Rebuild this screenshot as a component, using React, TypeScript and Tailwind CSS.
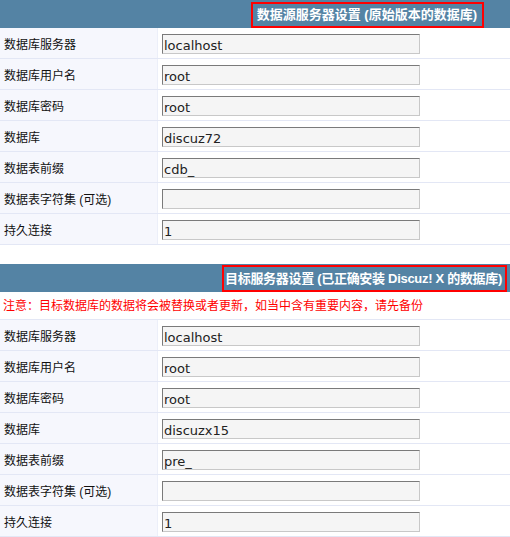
import React from 'react';

type Field = { label: string; value: string };

const sourceFields: Field[] = [
  { label: '数据库服务器', value: 'localhost' },
  { label: '数据库用户名', value: 'root' },
  { label: '数据库密码', value: 'root' },
  { label: '数据库', value: 'discuz72' },
  { label: '数据表前缀', value: 'cdb_' },
  { label: '数据表字符集 (可选)', value: '' },
  { label: '持久连接', value: '1' },
];

const targetFields: Field[] = [
  { label: '数据库服务器', value: 'localhost' },
  { label: '数据库用户名', value: 'root' },
  { label: '数据库密码', value: 'root' },
  { label: '数据库', value: 'discuzx15' },
  { label: '数据表前缀', value: 'pre_' },
  { label: '数据表字符集 (可选)', value: '' },
  { label: '持久连接', value: '1' },
];

const cjk = "font-['Liberation_Sans','Noto_Sans_CJK_SC',sans-serif]";

function FieldRow({ field }: { field: Field }) {
  return (
    <div className="flex h-[31px] border-b border-[#e3e7f5]">
      <div className={`w-[158px] shrink-0 bg-[#f6f7fd] border-r border-[#eceff9] pl-[4px] pt-[3px] flex items-center text-[12px] text-[#111] ${cjk}`}>
        {field.label}
      </div>
      <div className="flex-1 flex items-center pl-[4px] pt-[2px]">
        <input
          readOnly
          value={field.value}
          className="w-[258px] h-[20px] bg-[#f5f5f5] border border-t-[#7a7a7a] border-l-[#7a7a7a] border-r-[#c8c8c8] border-b-[#c8c8c8] px-[1px] pt-[2px] text-[13px] text-[#222] font-['DejaVu_Sans',sans-serif] outline-none"
        />
      </div>
    </div>
  );
}

export default function App() {
  return (
    <div className="w-[510px] h-[537px] bg-white overflow-hidden">
      {/* Source database */}
      <div className="h-[28px] bg-[#5483a4] flex justify-end items-start pr-[26px]">
        <span className={`mt-[2px] h-[26px] border-2 border-[#ff0000] pl-[4px] pr-[5px] flex items-center text-[13px] font-bold text-white whitespace-nowrap ${cjk}`}>
          数据源服务器设置 (原始版本的数据库)
        </span>
      </div>
      {sourceFields.map((f) => (
        <FieldRow key={'s' + f.label} field={f} />
      ))}

      <div className="h-[19px]" />

      {/* Target database */}
      <div className="h-[28px] bg-[#5483a4] flex justify-end items-start pr-[3px]">
        <span className={`mt-[1px] h-[27px] w-[285px] border-2 border-[#ff0000] pl-[1px] flex items-center text-[13px] font-bold text-white whitespace-nowrap tracking-[-0.3px] ${cjk}`}>
          目标服务器设置 (已正确安装 Discuz! X 的数据库)
        </span>
      </div>
      <div className={`h-[28px] border-b border-[#e3e7f5] pl-[3px] pt-[1px] flex items-center text-[12px] text-[#ff0000] ${cjk}`}>
        注意：目标数据库的数据将会被替换或者更新，如当中含有重要内容，请先备份
      </div>
      {targetFields.map((f) => (
        <FieldRow key={'t' + f.label} field={f} />
      ))}
    </div>
  );
}
